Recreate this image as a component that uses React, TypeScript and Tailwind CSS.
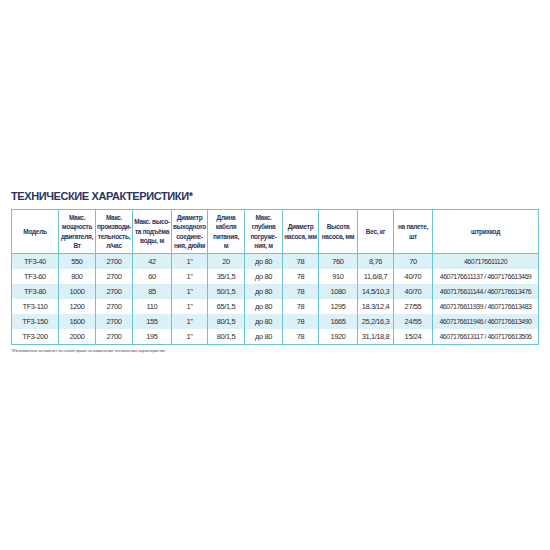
const headers = [
  "Модель",
  "Макс.\nмощность\nдвигателя,\nВт",
  "Макс.\nпроизводи-\nтельность,\nл/час",
  "Макс. высо-\nта подъёма\nводы, м",
  "Диаметр\nвыходного\nсоедине-\nния, дюйм",
  "Длина\nкабеля\nпитания,\nм",
  "Макс.\nглубина\nпогруже-\nния, м",
  "Диаметр\nнасоса, мм",
  "Высота\nнасоса, мм",
  "Вес, кг",
  "на палете,\nшт",
  "штрихкод",
];

const widths = [47, 37, 37, 39, 36, 37, 38, 36, 39, 36, 39, 106];

const rows = [
  ["TF3-40", "550", "2700", "42", "1\"", "20", "до 80", "78", "760", "8,76", "70", "4607176611120"],
  ["TF3-60", "800", "2700", "60", "1\"", "35/1,5", "до 80", "78", "910", "11,6/8,7", "40/70", "4607176611137 / 4607176613469"],
  ["TF3-80", "1000", "2700", "85", "1\"", "50/1,5", "до 80", "78", "1080", "14,5/10,3", "40/70", "4607176611144 / 4607176613476"],
  ["TF3-110", "1200", "2700", "110", "1\"", "65/1,5", "до 80", "78", "1295", "18.3/12,4", "27/55", "4607176611939 / 4607176613483"],
  ["TF3-150", "1600", "2700", "155", "1\"", "80/1,5", "до 80", "78", "1665", "25,2/16,3", "24/55", "4607176611946 / 4607176613490"],
  ["TF3-200", "2000", "2700", "195", "1\"", "80/1,5", "до 80", "78", "1920", "31,1/18,8", "15/24", "4607176613117 / 4607176613506"],
];

export default function App() {
  return (
    <div
      className="h-[550px] w-[550px] bg-white pl-[11px] pt-[191px]"
      style={{ fontFamily: "'Liberation Sans', 'Open Sans', sans-serif" }}
    >
      <h2 className="text-[11px] font-bold leading-[11px] tracking-[-0.4px] text-[#283467]">
        ТЕХНИЧЕСКИЕ ХАРАКТЕРИСТИКИ*
      </h2>
      <table className="mt-[7px] w-[527px] table-fixed border-collapse border-[1.5px] border-[#6cc3d2]">
        <colgroup>
          {widths.map((w, i) => (
            <col key={i} style={{ width: w }} />
          ))}
        </colgroup>
        <thead>
          <tr className="h-[44px]">
            {headers.map((h) => (
              <th
                key={h}
                className="whitespace-pre-line border border-[#6cc3d2] p-0 text-center align-middle text-[6.5px] font-bold leading-[9.5px] tracking-[-0.3px] text-[#2a3460]"
              >
                {h}
              </th>
            ))}
          </tr>
        </thead>
        <tbody>
          {rows.map((r, ri) => (
            <tr key={ri} className={ri % 2 === 0 ? "h-[15px] bg-[#dcf0f8]" : "h-[15px] bg-white"}>
              {r.map((c, ci) => (
                <td
                  key={ci}
                  className={
                    ci === 11
                      ? "border-x border-[#6cc3d2] p-0 text-center align-middle text-[7px] leading-[15px] tracking-[-0.5px] text-[#2f2f2f]"
                      : "border-x border-[#6cc3d2] p-0 text-center align-middle text-[7.5px] leading-[15px] tracking-[-0.4px] text-[#2f2f2f]"
                  }
                >
                  {c}
                </td>
              ))}
            </tr>
          ))}
        </tbody>
      </table>
      <p className="mt-[3px] text-[4px] leading-[5px] text-[#444]">
        *Изготовитель оставляет за собой право на изменение технических характеристик
      </p>
    </div>
  );
}
